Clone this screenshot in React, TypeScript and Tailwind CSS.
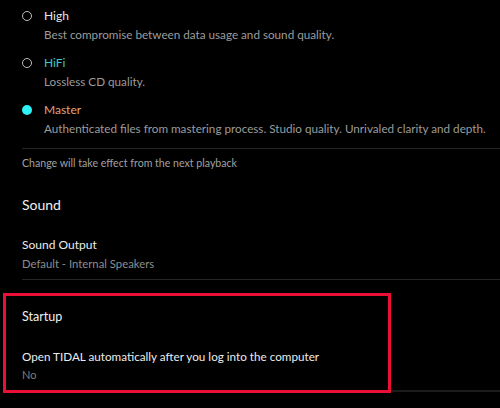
import React from 'react';

const OPTIONS = [
  { label: 'High', desc: 'Best compromise between data usage and sound quality.', color: 'text-[#e6e6e6]', active: false },
  { label: 'HiFi', desc: 'Lossless CD quality.', color: 'text-[#3cc8c8]', active: false },
  { label: 'Master', desc: 'Authenticated files from mastering process. Studio quality. Unrivaled clarity and depth.', color: 'text-[#e0a47a]', active: true },
];

const App: React.FC = () => {
  return (
    <div className="relative w-[500px] h-[408px] overflow-hidden bg-black text-white" style={{ fontFamily: 'Lato, "Noto Sans", sans-serif' }}>
      {/* Quality options */}
      <div className="flex flex-col pt-[7px]">
        {OPTIONS.map((o) => (
          <div key={o.label} className="flex h-[47px] pl-[22px]">
            <div className="w-[22px] pt-[4px]">
              {o.active ? (
                <div className="w-[10px] h-[10px] rounded-full bg-[#2ef2f5]"></div>
              ) : (
                <div className="w-[10px] h-[10px] rounded-full border border-[#bdbdbd]"></div>
              )}
            </div>
            <div className="flex flex-col">
              <span className={`text-[12px] leading-[17px] ${o.color}`}>{o.label}</span>
              <span className="text-[11.7px] leading-[17px] mt-[2px] text-[#9c9c9c]">{o.desc}</span>
            </div>
          </div>
        ))}
      </div>

      <div className="ml-[22px] h-px bg-[#262626]"></div>
      <p className="pl-[22px] pt-[7px] text-[10.6px] leading-[14px] text-[#a0a0a0]">Change will take effect from the next playback</p>

      {/* Sound */}
      <div className="pl-[22px] pt-[26px]">
        <h2 className="text-[14px] leading-[18px] text-[#f0f0f0]">Sound</h2>
        <div className="pt-[23px]">
          <div className="text-[12px] leading-[16px] text-[#ececec]">Sound Output</div>
          <div className="text-[11.3px] leading-[16px] mt-[3px] text-[#8e8e8e]">Default - Internal Speakers</div>
        </div>
      </div>

      <div className="ml-[22px] mt-[7px] h-px bg-[#262626]"></div>

      {/* Startup */}
      <div className="pl-[22px] pt-[28px]">
        <h2 className="text-[12.5px] leading-[18px] text-[#f0f0f0]">Startup</h2>
        <div className="pt-[22px]">
          <div className="text-[11.7px] leading-[16px] text-[#ececec]">Open TIDAL automatically after you log into the computer</div>
          <div className="text-[11px] leading-[16px] mt-[3px] text-[#7e7e7e]">No</div>
        </div>
      </div>

      <div className="ml-[22px] mt-[7px] h-[2px] bg-[#1c1c1c]"></div>

      {/* annotation highlight */}
      <div className="absolute left-[3px] top-[293px] w-[388px] h-[100px] border-[3px] border-[#ec0f35] pointer-events-none"></div>
    </div>
  );
};

export default App;
